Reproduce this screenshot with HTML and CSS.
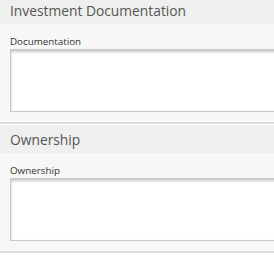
FILE: index.html
```html
<!DOCTYPE html>
<html lang="en">
<head>
    <meta charset="UTF-8">
    <meta name="viewport" content="width=device-width, initial-scale=1.0">
    <title>Investment Details</title>
    <link rel="stylesheet" href="styles.css">
</head>
<body>
    <div class="page">
        <div class="panel">
            <h2 class="panel-title">Investment Documentation</h2>
            <div class="panel-body">
                <label class="field-label" for="documentation">Documentation</label>
                <textarea id="documentation" class="field-text"></textarea>
            </div>
        </div>

        <div class="panel">
            <h2 class="panel-title">Ownership</h2>
            <div class="panel-body">
                <label class="field-label" for="ownership">Ownership</label>
                <textarea id="ownership" class="field-text"></textarea>
            </div>
        </div>
    </div>
</body>
</html>
```

FILE: styles.css
```css
body {
    margin: 0;
    overflow: hidden;
    background: #ffffff;
    font-family: "Open Sans", "Noto Sans", sans-serif;
}
.page {
    margin-top: -4px;
}
.panel {
    border-bottom: 2px solid #dcdedc;
    margin-bottom: 1px;
}
.panel-title {
    margin: 0;
    height: 28px;
    padding: 0 10px;
    background: #eef0ee;
    color: #555555;
    font-size: 13.8px;
    font-weight: 400;
    line-height: 30px;
    white-space: nowrap;
}
.panel-body {
    background: #f6f7f6;
    padding: 12px 0 10px 10px;
}
.field-label {
    display: block;
    color: #333333;
    font-size: 9.8px;
    line-height: 12px;
    margin-bottom: 1px;
}
.field-text {
    display: block;
    box-sizing: border-box;
    width: 400px;
    height: 63px;
    margin: 0;
    border: 1px solid #c8c8c8;
    background: #ffffff;
    box-shadow: inset 0 2px 3px rgba(0, 0, 0, 0.22);
    resize: none;
}
```
